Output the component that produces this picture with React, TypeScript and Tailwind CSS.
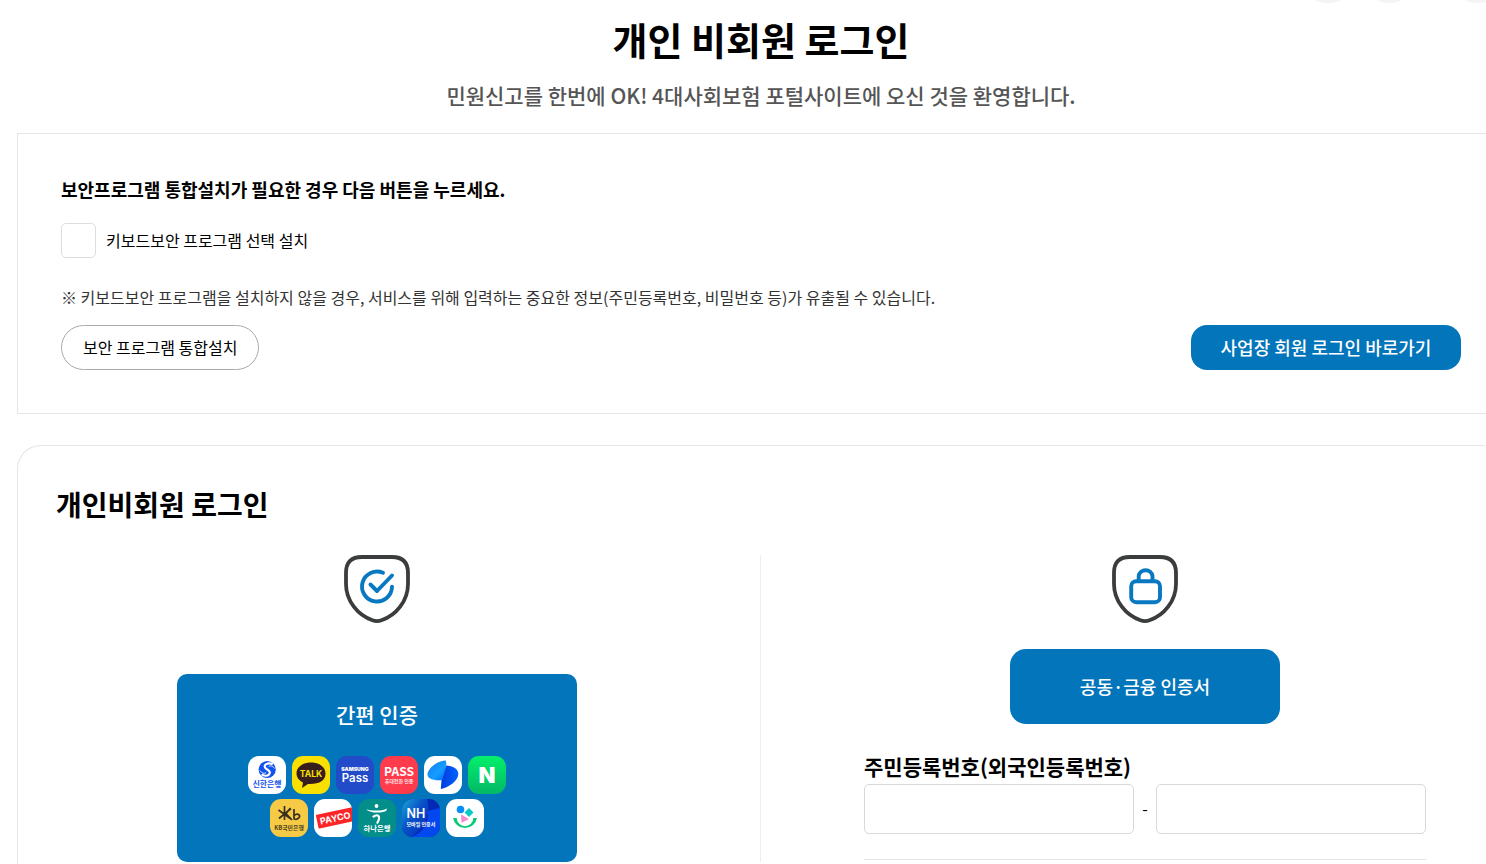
import type { ReactNode } from 'react';

function Shield({ children }: { children: ReactNode }) {
  return (
    <svg className="h-[68px] w-[66px]" viewBox="0 0 66 68" fill="none" aria-hidden="true">
      <path
        d="M18 2H48Q64 2 64 18V29C64 46 52 60.5 37.5 65.3Q33 66.8 28.5 65.3C14 60.5 2 46 2 29V18Q2 2 18 2Z"
        stroke="#3a3c3d"
        strokeWidth="3.8"
        strokeLinejoin="round"
      />
      <g stroke="#0878c0" strokeWidth="3.9" strokeLinecap="round" strokeLinejoin="round">
        {children}
      </g>
    </svg>
  );
}

function Tile({ label, bg, children }: { label: string; bg: string; children: ReactNode }) {
  return (
    <svg
      className={`size-[38px] rounded-[11px] font-['Noto_Sans_CJK_KR','Noto_Sans',sans-serif] ${bg}`}
      viewBox="0 0 38 38"
      role="img"
      aria-label={label}
    >
      {children}
    </svg>
  );
}

function ProviderIcons() {
  return (
    <span className="mt-[25px] flex flex-col items-center gap-[5px]">
      <span className="flex gap-1.5">
        <Tile label="신한은행" bg="bg-white">
          <circle cx="19.2" cy="13.5" r="8.6" fill="#1352ed" />
          <path d="M24.8 8.2C20 5.8 14.5 9 17.6 12.2C20 14.5 23.4 15.4 21 18.4C19.2 20.4 15.8 19.8 13.6 18.4" fill="none" stroke="#fff" strokeWidth="2.2" />
          <path d="M12 14.5C13.4 17.2 16.6 18.2 18.2 16.4M26.6 12.5C25 9.9 22 9.2 20.6 10.6" fill="none" stroke="#fff" strokeWidth="0.9" />
          <text x="19" y="31.4" textAnchor="middle" fontSize="7.8" fontWeight="700" fill="#1352ed">신한은행</text>
        </Tile>
        <Tile label="카카오톡" bg="bg-[#f9e000]">
          <path d="M19 6.5C10.5 6.5 4.5 11.3 4.5 17.3C4.5 21.4 7 24.7 11 26.6L10 32L16 28Q33.5 28.5 33.5 17.3C33.5 11.3 27.5 6.5 19 6.5Z" fill="#371d1e" />
          <text x="19" y="20.8" textAnchor="middle" fontSize="8.6" fontWeight="700" fill="#f9e000" fontFamily="Inter">TALK</text>
        </Tile>
        <Tile label="삼성패스" bg="bg-[#214bc8]">
          <text x="19" y="14.5" textAnchor="middle" fontSize="5.2" fontWeight="900" fill="#fff" fontFamily="Inter">SAMSUNG</text>
          <text x="19" y="25.6" textAnchor="middle" fontSize="11.4" fontWeight="600" fill="#fff" fontFamily="Inter">Pass</text>
        </Tile>
        <Tile label="PASS" bg="bg-[#ff3b4c]">
          <text x="19" y="20" textAnchor="middle" fontSize="12" fontWeight="600" fill="#fff" fontFamily="Noto Sans CJK KR">PASS</text>
          <text x="19" y="27" textAnchor="middle" fontSize="5" fontWeight="500" fill="#fff">휴대전화 인증</text>
        </Tile>
        <Tile label="토스" bg="bg-white">
          <defs>
            <linearGradient id="tossLeft" x1="0" y1="0" x2="1" y2="1">
              <stop offset="0" stopColor="#1479f2" />
              <stop offset="0.6" stopColor="#159eff" />
              <stop offset="1" stopColor="#0064ff" />
            </linearGradient>
            <linearGradient id="tossRight" x1="0" y1="0" x2="1" y2="0">
              <stop offset="0" stopColor="#003bdc" />
              <stop offset="1" stopColor="#0064ff" />
            </linearGradient>
          </defs>
          <path d="M21.8 4.5C14 4.5 4 12 3.5 18C3.2 23 9.5 24.8 17.5 24.2C20.5 19 22.8 11 21.8 4.5Z" fill="url(#tossLeft)" />
          <path d="M21.8 4.5C22.4 7 22.3 8.5 22 9.5C20.8 15.5 19.4 20 17.5 24.2L16.8 33C25 31.5 34.3 24.5 34.3 18C34.3 12.5 29 10 22 9.5Z" fill="url(#tossRight)" />
        </Tile>
        <Tile label="네이버" bg="bg-linear-to-b from-[#04f06a] to-[#04b765]">
          <text x="19" y="26.8" textAnchor="middle" fontSize="22" fontWeight="900" fill="#fff" fontFamily="Inter">N</text>
        </Tile>
      </span>
      <span className="flex gap-1.5">
        <Tile label="KB국민은행" bg="bg-[#f7ca46]">
          <path d="M14.5 7V21M8.5 11L21 20M21 9.5L9 19.5M20.5 9L16 14.5L22 21M24 10V20.5M24 16.5C28 13.5 31.5 16.5 28.5 19.2C27 20.5 25 20.5 24 19.5" fill="none" stroke="#342f20" strokeWidth="1.7" />
          <text x="19" y="31" textAnchor="middle" fontSize="5.9" fontWeight="600" fill="#4b431f">KB국민은행</text>
        </Tile>
        <Tile label="PAYCO" bg="bg-white">
          <g transform="rotate(-12 19 20)">
            <rect x="3" y="12.5" width="42" height="14" rx="1" fill="#fb2528" />
            <text x="6" y="22.8" fontSize="9" fontWeight="700" fill="#fff" fontFamily="Inter">PAYCO</text>
          </g>
        </Tile>
        <Tile label="하나은행" bg="bg-[#038e89]">
          <circle cx="18.5" cy="7" r="1.9" fill="#fff" />
          <path d="M8 10.2C12 11.8 24 12.4 29 9.4L28.5 11.5C25 14.5 12 14.5 8 10.2Z" fill="#fff" />
          <path d="M14.8 18.2C19.8 14.2 23.5 17 19 24.5" fill="none" stroke="#fff" strokeWidth="2.2" />
          <text x="19" y="32" textAnchor="middle" fontSize="7.3" fontWeight="700" fill="#fff">하나은행</text>
        </Tile>
        <Tile label="NH모바일인증서" bg="bg-[#0429b7]">
          <defs>
            <linearGradient id="nhSweep" x1="0" y1="0" x2="1" y2="1">
              <stop offset="0" stopColor="#1ba6d4" />
              <stop offset="0.45" stopColor="#0850c8" />
              <stop offset="1" stopColor="#0429b7" />
            </linearGradient>
          </defs>
          <path d="M0 0H25C29 14 23 29 9 38H0Z" fill="url(#nhSweep)" />
          <path d="M9 38C21 34 27 24 26 12L38 9V38Z" fill="#0348ef" />
          <text x="4.5" y="18.8" fontSize="12.5" fontWeight="600" fill="#fff" fontFamily="Inter">NH</text>
          <text x="4.5" y="26.5" fontSize="5" fontWeight="600" fill="#fff">모바일 인증서</text>
        </Tile>
        <Tile label="인증서" bg="bg-white">
          <path d="M7 19A12.2 12.2 0 0 0 31 19H27.3A8.3 8.3 0 0 1 10.7 19Z" fill="#09ca77" />
          <circle cx="14.5" cy="10.5" r="3.8" fill="#078ff5" />
          <path d="M23 9L27.5 13.5L23 18L18.5 13.5Z" fill="#09c9c7" />
          <path d="M15 15.5L23 20L15.5 23.8Z" fill="#f58bce" />
        </Tile>
      </span>
    </span>
  );
}

export default function App() {
  return (
    <div className="min-h-screen overflow-hidden bg-white pl-[17px] font-['Noto_Sans_CJK_KR','Noto_Sans',sans-serif] text-black">
      <div className="w-[calc(100%+19px)]">
        <div className="flex justify-end">
          <svg className="h-[3px] w-[200px]" viewBox="0 0 200 3" fill="#f4f4f4" aria-hidden="true">
            <circle cx="23" cy="-27" r="30" />
            <circle cx="84" cy="-27" r="30" />
            <circle cx="173" cy="-27" r="30" />
          </svg>
        </div>

        <header className="pt-2 text-center">
          <h1 className="text-[38px] leading-14 font-bold">개인 비회원 로그인</h1>
          <p className="mt-3 text-[21px] leading-8 font-medium text-[#555]">
            민원신고를 한번에 OK! 4대사회보험 포털사이트에 오신 것을 환영합니다.
          </p>
        </header>

        <main>
          <section className="mt-[22px] border border-[#e5e5e5] px-[43px] pt-[41px] pb-[43px]">
            <h2 className="text-[18px] leading-7 font-bold">보안프로그램 통합설치가 필요한 경우 다음 버튼을 누르세요.</h2>
            <div className="mt-5 flex items-center gap-2.5">
              <input
                id="keyboard-security"
                type="checkbox"
                className="size-[35px] appearance-none rounded-[5px] border border-[#ddd] bg-white checked:bg-[#0275bb]"
              />
              <label htmlFor="keyboard-security" className="pb-0.5 text-[16px] leading-6">키보드보안 프로그램 선택 설치</label>
            </div>
            <p className="mt-[27px] text-[16px] leading-6 text-[#333]">
              ※ 키보드보안 프로그램을 설치하지 않을 경우, 서비스를 위해 입력하는 중요한 정보(주민등록번호, 비밀번호 등)가 유출될 수 있습니다.
            </p>
            <div className="mt-4 flex justify-between">
              <button type="button" className="h-[45px] rounded-full border border-[#aaa] bg-white px-[21px] pb-0.5 text-[16px] leading-6">
                보안 프로그램 통합설치
              </button>
              <button type="button" className="h-[45px] w-[270px] rounded-2xl bg-[#0275bb] pb-0.5 text-[18px] leading-7 font-medium text-white">
                사업장 회원 로그인 바로가기
              </button>
            </div>
          </section>

          <section className="mt-[31px] rounded-t-3xl border border-b-0 border-[#e5e5e5] px-[38px] pt-[38px] pb-0.5">
            <h2 className="text-[28px] leading-10 font-bold">개인비회원 로그인</h2>
            <div className="mt-[31px] flex">
              <div className="flex flex-1 flex-col items-center border-r border-[#eee] pr-[62px]">
                <Shield>
                  <path d="M39 17.8A15 15 0 1 0 48 31.8M26.5 29.5L33 36L48 20.5" />
                </Shield>
                <button type="button" className="mt-[51px] w-full max-w-[400px] rounded-[10px] bg-[#0275bb] pt-6 pb-[25px] text-white">
                  <span className="mb-[26px] block text-[21px] leading-8 font-medium">간편 인증</span>
                  <ProviderIcons />
                </button>
              </div>
              <div className="flex flex-1 flex-col items-center pl-[63px]">
                <Shield>
                  <rect x="19.2" y="26.2" width="28.8" height="21" rx="5" />
                  <path d="M26.7 26V21A7 7 0 0 1 40.5 21V26" />
                </Shield>
                <button type="button" className="mt-[26px] h-[75px] w-[270px] rounded-2xl bg-[#0275bb] pb-0.5 text-[18px] leading-7 font-medium text-white">
                  공동·금융 인증서
                </button>
                <div className="mt-[26px] w-full max-w-[562px] border-b border-[#e5e5e5] pb-[25px]">
                  <label htmlFor="resident-front" className="mb-0.5 block text-[21px] leading-8 font-bold">주민등록번호(외국인등록번호)</label>
                  <div className="flex items-center">
                    <input id="resident-front" type="text" maxLength={6} className="h-[50px] min-w-0 flex-1 rounded-[5px] border border-[#d9d9d9] bg-white px-3" />
                    <span className="w-[22px] pb-0.5 text-center text-[16px] leading-6">-</span>
                    <input type="password" maxLength={7} aria-label="주민등록번호 뒷자리" className="h-[50px] min-w-0 flex-1 rounded-[5px] border border-[#d9d9d9] bg-white px-3" />
                  </div>
                </div>
              </div>
            </div>
          </section>
        </main>
      </div>
    </div>
  );
}
